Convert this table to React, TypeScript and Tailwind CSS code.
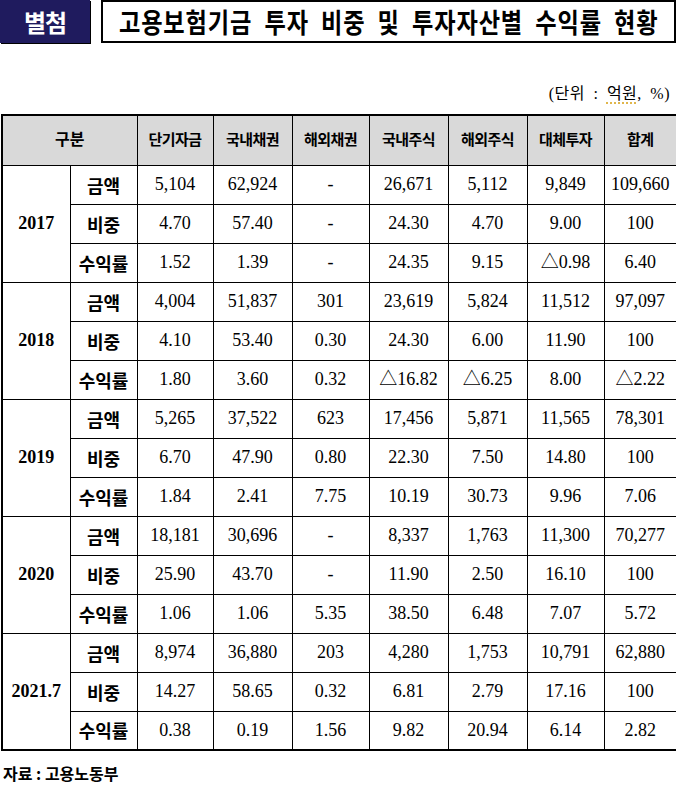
import React from 'react';

const serif = { fontFamily: '"Liberation Serif", "Noto Sans CJK KR", serif' };

type Row = { label: string; values: string[] };
type Group = { year: string; rows: Row[] };

const heads = ['단기자금', '국내채권', '해외채권', '국내주식', '해외주식', '대체투자', '합계'];

const groups: Group[] = [
  {
    year: '2017',
    rows: [
      { label: '금액', values: ['5,104', '62,924', '-', '26,671', '5,112', '9,849', '109,660'] },
      { label: '비중', values: ['4.70', '57.40', '-', '24.30', '4.70', '9.00', '100'] },
      { label: '수익률', values: ['1.52', '1.39', '-', '24.35', '9.15', '△0.98', '6.40'] },
    ],
  },
  {
    year: '2018',
    rows: [
      { label: '금액', values: ['4,004', '51,837', '301', '23,619', '5,824', '11,512', '97,097'] },
      { label: '비중', values: ['4.10', '53.40', '0.30', '24.30', '6.00', '11.90', '100'] },
      { label: '수익률', values: ['1.80', '3.60', '0.32', '△16.82', '△6.25', '8.00', '△2.22'] },
    ],
  },
  {
    year: '2019',
    rows: [
      { label: '금액', values: ['5,265', '37,522', '623', '17,456', '5,871', '11,565', '78,301'] },
      { label: '비중', values: ['6.70', '47.90', '0.80', '22.30', '7.50', '14.80', '100'] },
      { label: '수익률', values: ['1.84', '2.41', '7.75', '10.19', '30.73', '9.96', '7.06'] },
    ],
  },
  {
    year: '2020',
    rows: [
      { label: '금액', values: ['18,181', '30,696', '-', '8,337', '1,763', '11,300', '70,277'] },
      { label: '비중', values: ['25.90', '43.70', '-', '11.90', '2.50', '16.10', '100'] },
      { label: '수익률', values: ['1.06', '1.06', '5.35', '38.50', '6.48', '7.07', '5.72'] },
    ],
  },
  {
    year: '2021.7',
    rows: [
      { label: '금액', values: ['8,974', '36,880', '203', '4,280', '1,753', '10,791', '62,880'] },
      { label: '비중', values: ['14.27', '58.65', '0.32', '6.81', '2.79', '17.16', '100'] },
      { label: '수익률', values: ['0.38', '0.19', '1.56', '9.82', '20.94', '6.14', '2.82'] },
    ],
  },
];

const colWidths = [68, 67, 76, 79, 77, 79, 79, 77, 73];

export default function App() {
  return (
    <div className="w-[676px] h-[788px] bg-white text-black" style={serif}>
      {/* title */}
      <div className="flex h-[43px] items-stretch">
        <div className="flex w-[90px] items-center justify-center bg-[#1f1b5e] shadow-[1px_1px_0_#000]">
          <span className="font-['Noto_Sans_CJK_KR'] text-[24px] font-bold leading-none tracking-[-1px] text-white">
            별첨
          </span>
        </div>
        <div className="ml-[11px] flex flex-1 items-center justify-center overflow-hidden border-2 border-black">
          <span className="inline-block origin-center scale-x-[0.86] whitespace-nowrap font-['Noto_Sans_CJK_KR'] text-[27px] font-bold leading-none tracking-[1px] [word-spacing:7px]">
            고용보험기금 투자 비중 및 투자자산별 수익률 현황
          </span>
        </div>
      </div>

      <div className="mt-[41px] pr-[6px] text-right text-[16px] leading-[20px] tracking-[0.5px] [word-spacing:4px]">
        (단위 : <span className="underline decoration-dotted decoration-[#d9a520] underline-offset-4">억원</span>, %)
      </div>

      <table className="ml-[1px] mt-[10px] w-[675px] table-fixed border-collapse border-2 border-black text-center">
        <colgroup>
          {colWidths.map((w, i) => (
            <col key={i} style={{ width: w }} />
          ))}
        </colgroup>
        <thead>
          <tr className="h-[50px] bg-[#d9d9d9]">
            <th colSpan={2} className="border border-black text-[16px] font-bold">
              구분
            </th>
            {heads.map((h) => (
              <th key={h} className="border border-black p-0 text-[15px] font-bold tracking-[-0.5px]">
                {h}
              </th>
            ))}
          </tr>
        </thead>
        <tbody>
          {groups.map((g) =>
            g.rows.map((r, ri) => (
              <tr key={g.year + r.label} className="h-[39px]">
                {ri === 0 && (
                  <td rowSpan={3} className="border border-black p-0 text-[18px] font-bold">
                    {g.year}
                  </td>
                )}
                <td className="border border-black p-0 font-['Noto_Sans_CJK_KR'] text-[18px] font-bold leading-none">
                  {r.label}
                </td>
                {r.values.map((v, vi) => (
                  <td key={vi} className="border border-black p-0 text-[18px]">
                    {v}
                  </td>
                ))}
              </tr>
            ))
          )}
        </tbody>
      </table>

      <div className="mt-[12px] pl-[3px] font-['Noto_Sans_CJK_KR'] text-[16px] font-bold leading-[20px]">
        자료 : 고용노동부
      </div>
    </div>
  );
}
